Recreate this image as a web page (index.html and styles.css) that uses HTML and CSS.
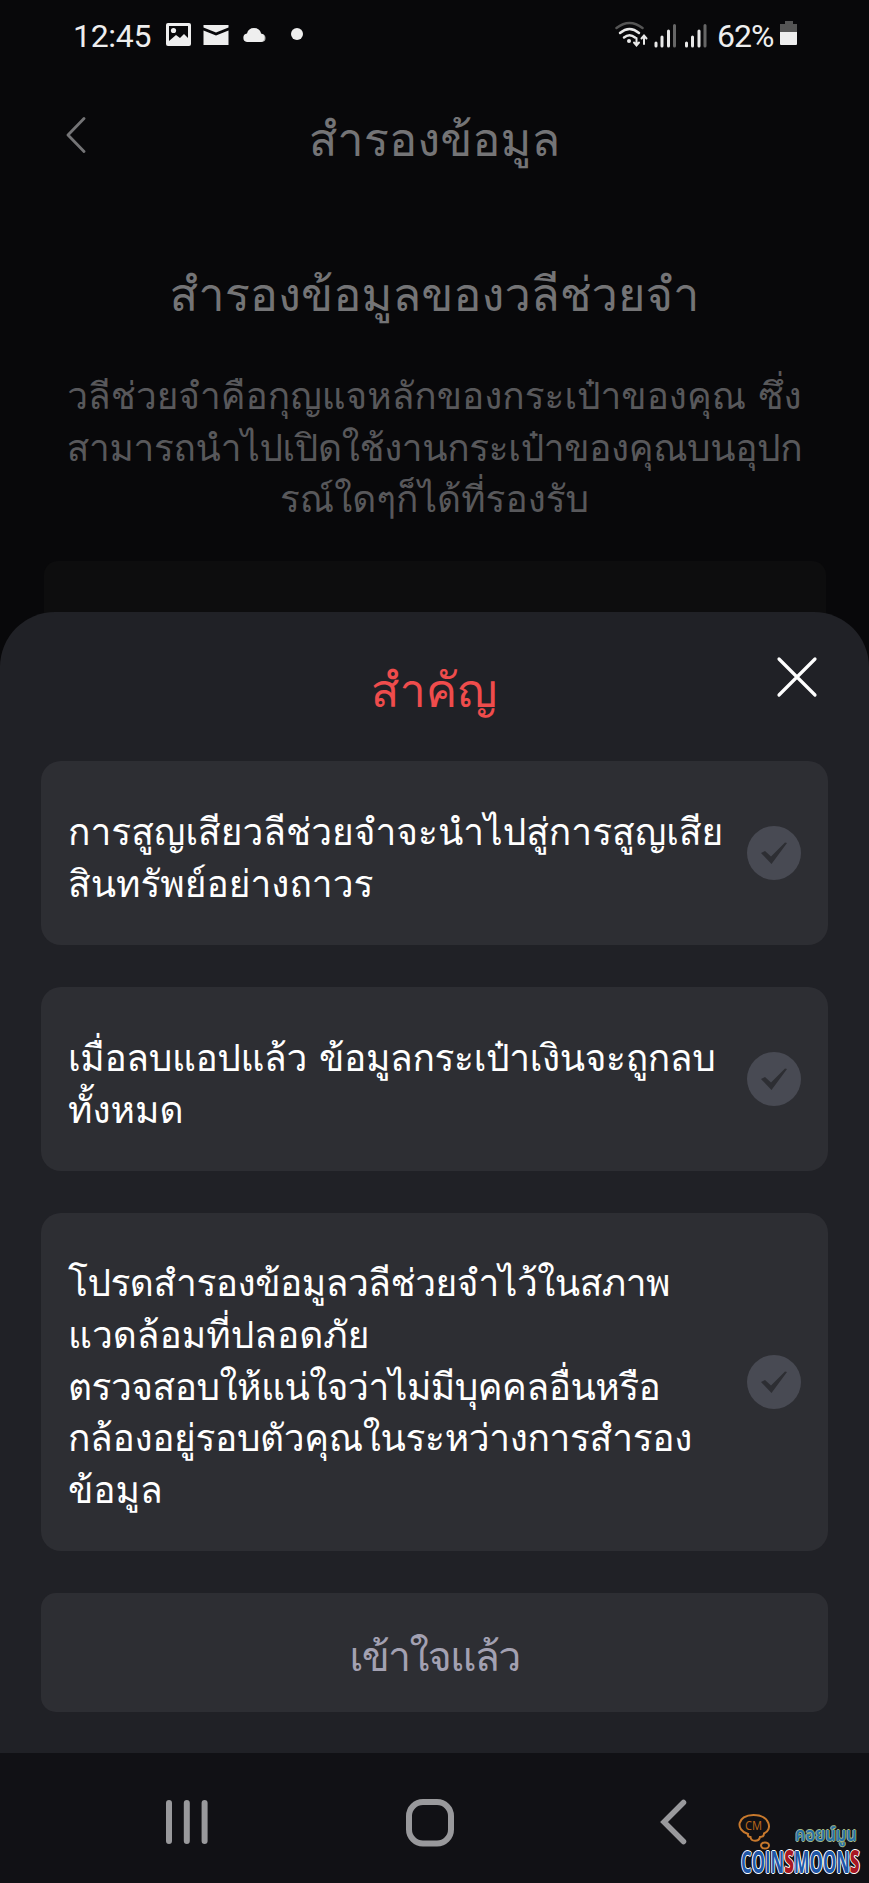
FILE: index.html
```html
<!DOCTYPE html>
<html lang="th">
<head>
<meta charset="utf-8">
<title>สำรองข้อมูล</title>
<link rel="stylesheet" href="styles.css">
</head>
<body>
<div class="screen">
  <header class="status">
    <span class="clock">12:45</span>
    <svg class="status-left" width="140" height="30" viewBox="0 0 140 30">
      <rect x="0" y="2" width="25" height="23" rx="2" fill="#eee"/>
      <path d="M3 5h19v12l-4-4-4 4-4-3-7 6z" fill="#08080a"/>
      <circle cx="7.500" cy="9.500" r="2.600" fill="#eee"/>
      <path d="M37.500 4h25v2.500L50 11.500 37.500 6.500zM37.500 9.500 50 14.500l12.500-5V24h-25z" fill="#eee"/>
      <path d="M92 8.500a6 6 0 0 1 3 4.500 4 4 0 0 1 1 8h-8z" fill="#aaa"/>
      <path d="M81 21a4.300 4.300 0 0 1 0-8.500 7.200 7.200 0 0 1 14 0A4.300 4.300 0 0 1 94.500 21z" fill="#eee"/>
      <circle cx="131" cy="13" r="6" fill="#eee"/>
    </svg>
    <svg class="status-right" width="94" height="30" viewBox="0 0 94 30" fill="none" stroke="#e8e8e8" stroke-linecap="round">
      <path d="M1.500 7Q14.500-3 27.500 7" stroke="#555" stroke-width="2.500"/>
      <path d="M5 12Q14.500 4 24 12M9 16.500Q14.500 12 20 16.500" stroke-width="2.500"/>
      <circle cx="14" cy="20" r="2" fill="#e8e8e8" stroke="none"/>
      <path d="M21.500 17v7M19 21.500l2.500 3 2.500-3M29 23v-8M26.500 17.500l2.500-3 2.500 3" stroke-width="2"/>
      <path d="M41 22v3M47 16v9M53.500 10v15M71.500 22v3M77.500 16v9M84 10v15" stroke-width="3"/>
      <path d="M59.500 4.500v20.500M90 4.500v20.500" stroke="#666" stroke-width="3"/>
    </svg>
    <span class="percent">62%</span>
    <svg class="battery" width="18" height="26" viewBox="0 0 18 26"><path d="M5 1h8v3h4v9H0V4h5z" fill="#555"/><path d="M0 12h17v12q0 1-1 1H1q-1 0-1-1z" fill="#eee"/></svg>
  </header>

  <div class="titlebar">
    <svg class="back" width="20" height="36" viewBox="0 0 20 36"><path d="M18 1.500 2 18l16 16.500" fill="none" stroke="#747476" stroke-width="2.800" stroke-linecap="round" stroke-linejoin="round"/></svg>
    <h1 class="page-title">สำรองข้อมูล</h1>
  </div>
  <h2 class="heading">สำรองข้อมูลของวลีช่วยจำ</h2>
  <p class="intro">
    <span class="line">วลีช่วยจำคือกุญแจหลักของกระเป๋าของคุณ ซึ่ง</span>
    <span class="line snug">สามารถนำไปเปิดใช้งานกระเป๋าของคุณบนอุปก</span>
    <span class="line">รณ์ใดๆก็ได้ที่รองรับ</span>
  </p>
  <div class="panel"></div>

  <section class="sheet">
    <div class="sheet-head">
      <h3 class="sheet-title">สำคัญ</h3>
      <svg class="close" width="42" height="42" viewBox="0 0 42 42"><path d="M3 3l36 36M39 3 3 39" stroke="#fff" stroke-width="3.200" stroke-linecap="round"/></svg>
    </div>
    <div class="card card-a">
      <p class="card-text"><span class="line">การสูญเสียวลีช่วยจำจะนำไปสู่การสูญเสีย</span><span class="line">สินทรัพย์อย่างถาวร</span></p>
      <svg class="check" width="54" height="54" viewBox="0 0 54 54"><circle cx="27" cy="27" r="27" fill="#484a53"/><path d="M14 27l4-2 6 5.500 14-14 2 .5L24.500 38z" fill="#2d2e33"/></svg>
    </div>
    <div class="card card-b">
      <p class="card-text"><span class="line snug">เมื่อลบแอปแล้ว ข้อมูลกระเป๋าเงินจะถูกลบ</span><span class="line">ทั้งหมด</span></p>
      <svg class="check" width="54" height="54" viewBox="0 0 54 54"><circle cx="27" cy="27" r="27" fill="#484a53"/><path d="M14 27l4-2 6 5.500 14-14 2 .5L24.500 38z" fill="#2d2e33"/></svg>
    </div>
    <div class="card card-c">
      <p class="card-text"><span class="line tight">โปรดสำรองข้อมูลวลีช่วยจำไว้ในสภาพ</span><span class="line">แวดล้อมที่ปลอดภัย</span><span class="line tight">ตรวจสอบให้แน่ใจว่าไม่มีบุคคลอื่นหรือ</span><span class="line snug">กล้องอยู่รอบตัวคุณในระหว่างการสำรอง</span><span class="line">ข้อมูล</span></p>
      <svg class="check" width="54" height="54" viewBox="0 0 54 54"><circle cx="27" cy="27" r="27" fill="#484a53"/><path d="M14 27l4-2 6 5.500 14-14 2 .5L24.500 38z" fill="#2d2e33"/></svg>
    </div>
    <button class="confirm">เข้าใจแล้ว</button>
  </section>

  <nav class="nav">
    <svg class="recents" width="42" height="46" viewBox="0 0 42 46"><path d="M3 4v38M20.800 4v38M38.600 4v38" stroke="#99999c" stroke-width="6" stroke-linecap="round"/></svg>
    <svg class="home" width="48" height="48" viewBox="0 0 48 48"><rect x="3" y="3" width="42" height="41.500" rx="14" fill="none" stroke="#99999c" stroke-width="6"/></svg>
    <svg class="navback" width="28" height="46" viewBox="0 0 28 46"><path d="M23.500 3.500 4 23l19.500 19.500" fill="none" stroke="#99999c" stroke-width="5.500" stroke-linecap="round" stroke-linejoin="miter"/></svg>
    <div class="mark">
      <svg class="bubble" width="34" height="38" viewBox="0 0 34 38">
        <path d="M10 21C-3 17-1 2 15.500 2S35 17 26 20.500c0 3-2 3.500-4 3.500-1 5-9 5-9.500 0C10.500 24 9.500 23 10 21z" fill="none" stroke="#c8792d" stroke-width="2"/>
        <ellipse cx="27" cy="32.500" rx="4" ry="3" fill="none" stroke="#c8792d" stroke-width="2"/>
        <text class="mark-cm" x="7" y="17" textLength="17" lengthAdjust="spacingAndGlyphs">CM</text>
      </svg>
      <span class="mark-thai">คอยน์มูน</span>
      <span class="mark-name">COIN<b class="red">S</b>MOON<b class="red">S</b></span>
    </div>
  </nav>
</div>
</body>
</html>
```
FILE: styles.css
```css
* { box-sizing: border-box; }
body { margin: 0; background: #08080a; font-family: Loma, "Noto Sans", sans-serif; }
h1, h2, h3, p { margin: 0; font-weight: 400; }
svg { display: block; flex: none; }
.screen { width: 869px; height: 1883px; display: flex; flex-direction: column; overflow: hidden; background: #08080a; }
.status { height: 70px; flex: none; display: flex; padding: 20px 71px 0 73px; color: #eee; font-family: Roboto, sans-serif; }
.clock, .percent { font-size: 32px; line-height: 32px; white-space: nowrap; }
.clock { width: 93px; letter-spacing: -.3px; }
.status-left { margin-top: 1px; }
.status-right { margin: 1px 8px 0 auto; }
.percent { width: 63px; letter-spacing: -1px; }
.titlebar { height: 130px; flex: none; display: flex; padding: 47px 66px 0; }
.page-title { flex: 1; margin-right: 20px; text-align: center; font-size: 47px; line-height: 60px; margin-top: -7px; color: #747476; }
.heading { text-align: center; font-size: 47px; line-height: 60px; margin-top: 65px; color: #747476; flex: none; }
.intro { margin-top: 45px; flex: none; text-align: center; color: #58585b; }
.line { display: block; white-space: nowrap; font-size: 37.100px; height: 51.700px; line-height: 51.700px; }
.intro .line { font-size: 37px; }
.line.snug { letter-spacing: -.35px; }
.line.tight { letter-spacing: -.5px; }
.panel { margin: 36px 43px 0 44px; height: 66px; flex: none; border-radius: 14px 14px 0 0; background: #0d0d0e; }
.sheet { position: relative; margin-top: -15px; flex: 1; padding: 0 41px; background: #202126; border-radius: 55px 55px 0 0; display: flex; flex-direction: column; }
.sheet-head { height: 149px; flex: none; display: flex; padding: 44px 10px 0 53px; }
.sheet-title { flex: 1; text-align: center; font-size: 47px; line-height: 60px; margin: 5px 2px 0 0; color: #ef4c4c; }
.card { flex: none; display: flex; align-items: center; justify-content: space-between; padding: 0 27px 0 27px; border-radius: 20px; background: #2d2e33; color: #fff; margin-bottom: 42px; }
.card-text { padding-top: 9px; }
.card-a, .card-b { height: 184px; }
.card-c { height: 338px; }
.confirm { height: 119px; flex: none; border: 0; border-radius: 15px; background: #2d2e33; color: #a3a1b2; font: inherit; font-size: 41px; line-height: 60px; padding-top: 9px; letter-spacing: -1.700px; }
.nav { height: 130px; flex: none; display: flex; padding: 46px 0 0 166px; background: #111115; }
.home { margin-left: 198px; }
.navback { margin-left: 206px; }
.mark { margin: 14px 0 0 50px; width: 131px; height: 70px; display: grid; grid-template-columns: 34px 1fr; grid-template-rows: 36px 34px; white-space: nowrap; }
.mark-cm { font-family: "Noto Sans", sans-serif; font-size: 13px; fill: #b86619; }
.mark-thai { width: max-content; margin: 11px 0 0 23px; font-family: "Noto Sans Thai", sans-serif; font-size: 19px; line-height: 24px; font-weight: 600; color: #2870a8; text-shadow: 1px 0 #a4b985, -1px 0 #a4b985, 0 1px #a4b985, 0 -1px #a4b985; transform: scaleX(.87); transform-origin: left; }
.mark-name { grid-column: 1 / 3; width: max-content; margin-left: 3px; font-family: "Open Sans", sans-serif; font-size: 31px; line-height: 25px; font-weight: 700; color: #1e57a8; text-shadow: 1.500px 0 #fff, -1.500px 0 #fff, 0 1px #fff, 0 -1px #fff; transform: scaleX(.54); transform-origin: left; }
.red { color: #a81722; }
```
